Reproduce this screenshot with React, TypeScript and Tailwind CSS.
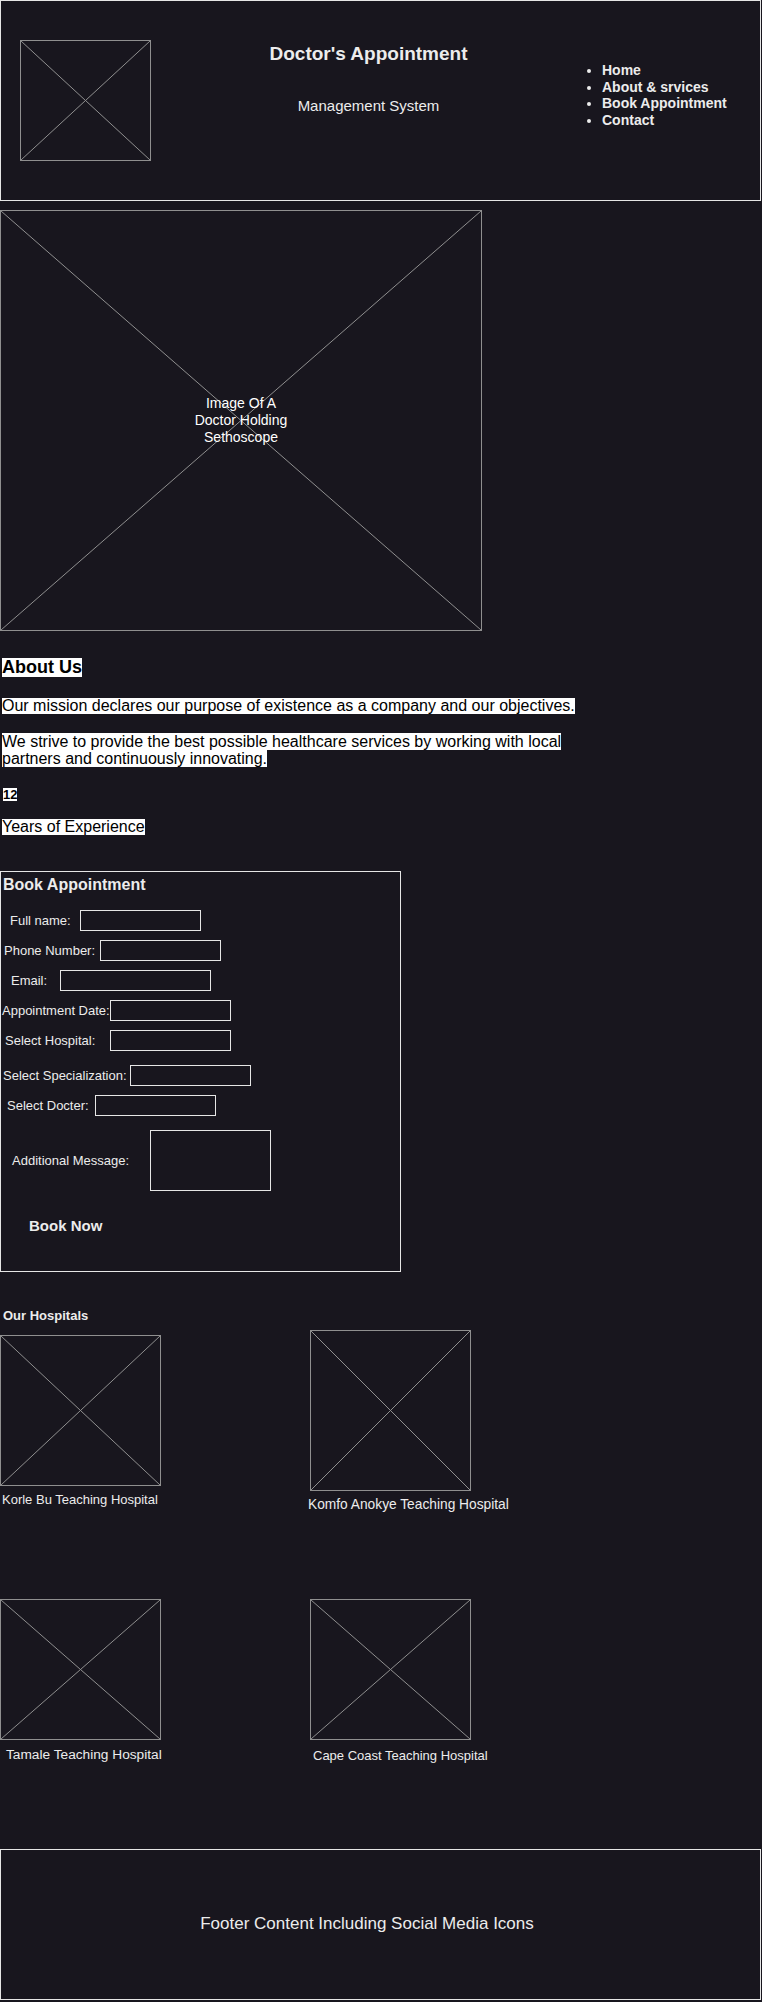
import React from "react";

function Placeholder({
  className,
  children,
}: {
  className: string;
  children?: React.ReactNode;
}) {
  return (
    <div className={`relative border border-[#8f8f8f] ${className}`}>
      <svg
        className="absolute inset-0 h-full w-full"
        viewBox="0 0 100 100"
        preserveAspectRatio="none"
      >
        <line x1="0" y1="0" x2="100" y2="100" stroke="#8f8f8f" strokeWidth="1" vectorEffect="non-scaling-stroke" />
        <line x1="100" y1="0" x2="0" y2="100" stroke="#8f8f8f" strokeWidth="1" vectorEffect="non-scaling-stroke" />
      </svg>
      {children && (
        <div className="relative flex h-full items-center justify-center">{children}</div>
      )}
    </div>
  );
}

export default function App() {
  const fields = [
    { label: "Full name:", lx: "pl-[9px] w-[79px]", iw: "w-[121px]", mt: "mt-[16px]" },
    { label: "Phone Number:", lx: "pl-[3px] w-[99px]", iw: "w-[121px]", mt: "mt-[9px]" },
    { label: "Email:", lx: "pl-[10px] w-[59px]", iw: "w-[151px]", mt: "mt-[9px]" },
    { label: "Appointment Date:", lx: "pl-[1px] w-[109px]", iw: "w-[121px]", mt: "mt-[9px]" },
    { label: "Select Hospital:", lx: "pl-[4px] w-[109px]", iw: "w-[121px]", mt: "mt-[9px]" },
    { label: "Select Specialization:", lx: "pl-[2px] w-[129px]", iw: "w-[121px]", mt: "mt-[14px]" },
    { label: "Select Docter:", lx: "pl-[6px] w-[94px]", iw: "w-[121px]", mt: "mt-[9px]" },
  ];

  return (
    <div className="min-h-[2002px] bg-[#18161e] font-['Liberation_Sans',Arial,sans-serif] text-[#ececec]">
      {/* Header */}
      <header className="grid h-[201px] w-[761px] grid-cols-[170px_395px_1fr] border border-[#e6e6e6]">
        <Placeholder className="ml-[19px] mt-[39px] h-[121px] w-[131px]" />
        <div className="text-center">
          <h1 className="mt-[42px] text-[19px] font-bold leading-[22px]">Doctor's Appointment</h1>
          <p className="mt-[32px] text-[15px] leading-[17px]">Management System</p>
        </div>
        <ul className="mt-[61px] list-disc pl-[36px] text-[14px] font-bold leading-[16.7px]">
          <li>Home</li>
          <li>About &amp; srvices</li>
          <li>Book Appointment</li>
          <li>Contact</li>
        </ul>
      </header>

      {/* Hero */}
      <Placeholder className="mt-[9px] h-[421px] w-[482px]">
        <p className="w-[100px] text-center text-[14px] leading-[17px] text-white">
          Image Of A Doctor Holding Sethoscope
        </p>
      </Placeholder>

      {/* About */}
      <section className="w-[600px] text-black">
        <h2 className="ml-[2px] mt-[27px] w-fit bg-white text-[18px] font-bold leading-[19px]">About Us</h2>
        <p className="ml-[2px] mt-[21px] w-fit bg-white text-[16px] leading-none">
          Our mission declares our purpose of existence as a company and our objectives.
        </p>
        <p className="ml-[2px] mt-[19px] text-[16px] leading-[17.3px]">
          <span className="bg-white">
            We strive to provide the best possible healthcare services by working with local partners and continuously
            innovating.
          </span>
        </p>
        <h4 className="ml-[3px] mt-[20px] w-fit bg-white text-[13px] font-bold leading-[13px]">12</h4>
        <p className="ml-[2px] mt-[18px] w-fit bg-white text-[16px] leading-none">Years of Experience</p>
      </section>

      {/* Booking form */}
      <form className="mt-[36px] h-[401px] w-[401px] border border-[#e6e6e6]">
        <h3 className="ml-[2px] mt-[4px] text-[16px] font-bold leading-[18px]">Book Appointment</h3>
        {fields.map((f) => (
          <div key={f.label} className={`flex items-center ${f.mt}`}>
            <label className={`text-[13px] leading-[15px] ${f.lx}`}>{f.label}</label>
            <input className={`h-[21px] border border-[#e6e6e6] bg-transparent ${f.iw}`} />
          </div>
        ))}
        <div className="mt-[14px] flex items-center">
          <label className="w-[149px] pl-[11px] text-[13px] leading-[15px]">Additional Message:</label>
          <textarea className="h-[61px] w-[121px] resize-none border border-[#e6e6e6] bg-transparent" />
        </div>
        <button type="button" className="ml-[28px] mt-[26px] text-[15px] font-bold leading-[17px]">
          Book Now
        </button>
      </form>

      {/* Hospitals */}
      <section>
        <h5 className="ml-[3px] mt-[36px] text-[13px] font-bold leading-[15px]">Our Hospitals</h5>
        <div className="grid grid-cols-[310px_1fr] items-start">
          <div className="mt-[12px]">
            <Placeholder className="h-[151px] w-[161px]" />
            <p className="ml-[2px] mt-[6px] text-[13px] leading-[15px]">Korle Bu Teaching Hospital</p>
          </div>
          <div className="mt-[7px]">
            <Placeholder className="h-[161px] w-[161px]" />
            <p className="ml-[-2px] mt-[6px] text-[13.75px] leading-[16px]">Komfo Anokye Teaching Hospital</p>
          </div>
        </div>
        <div className="mt-[86px] grid grid-cols-[310px_1fr] items-start">
          <div>
            <Placeholder className="h-[141px] w-[161px]" />
            <p className="ml-[6px] mt-[7px] text-[13.7px] leading-[16px]">Tamale Teaching Hospital</p>
          </div>
          <div>
            <Placeholder className="h-[141px] w-[161px]" />
            <p className="ml-[3px] mt-[8px] text-[13px] leading-[15px]">Cape Coast Teaching Hospital</p>
          </div>
        </div>
      </section>

      {/* Footer */}
      <footer className="mt-[86px] flex h-[151px] w-[761px] items-center justify-center border border-[#e6e6e6] pr-[27px]">
        <p className="text-[17px] leading-[20px]">Footer Content Including Social Media Icons</p>
      </footer>
    </div>
  );
}
